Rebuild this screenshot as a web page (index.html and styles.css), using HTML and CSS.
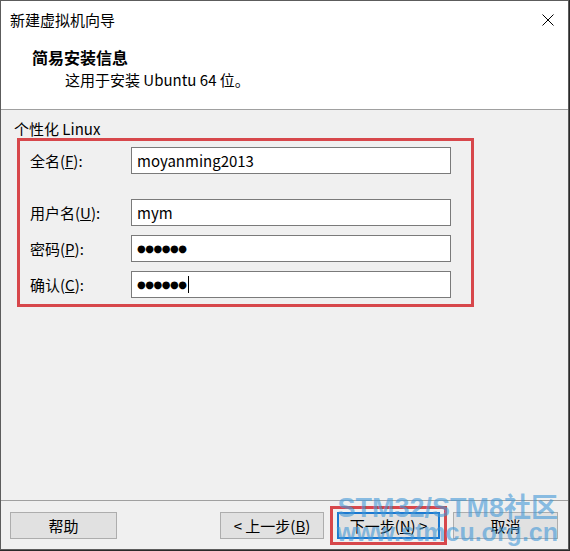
FILE: index.html
```html
<!DOCTYPE html>
<html lang="zh-CN">
<head>
    <meta charset="UTF-8">
    <title>新建虚拟机向导</title>
    <link rel="stylesheet" href="styles.css">
</head>
<body>
    <div class="window">
        <div class="titlebar">
            <span class="title">新建虚拟机向导</span>
            <svg class="close" width="12" height="12" viewBox="0 0 12 12">
                <path d="M0.5 0.5 L11.5 11.5 M11.5 0.5 L0.5 11.5" stroke="#000" stroke-width="1" fill="none"/>
            </svg>
        </div>

        <div class="header">
            <h1>简易安装信息</h1>
            <p>这用于安装 Ubuntu 64 位。</p>
        </div>

        <div class="content">
            <div class="group-title">个性化 Linux</div>
            <div class="form mark">
                <div class="row first">
                    <label>全名(<u>F</u>):</label>
                    <div class="field">moyanming2013</div>
                </div>
                <div class="row">
                    <label>用户名(<u>U</u>):</label>
                    <div class="field">mym</div>
                </div>
                <div class="row">
                    <label>密码(<u>P</u>):</label>
                    <div class="field dots">●●●●●●</div>
                </div>
                <div class="row">
                    <label>确认(<u>C</u>):</label>
                    <div class="field dots">●●●●●●<span class="caret"></span></div>
                </div>
            </div>
        </div>

        <div class="footer">
            <button class="btn btn-help">帮助</button>
            <span class="spacer"></span>
            <button class="btn btn-back">&lt; 上一步(<u>B</u>)</button>
            <span class="mark next-wrap">
                <button class="btn btn-next">下一步(<u>N</u>) &gt;</button>
            </span>
            <button class="btn btn-cancel">取消</button>
        </div>

        <div class="watermark">
            <div class="wm-top">STM32/STM8社区</div>
            <div class="wm-bottom">www.stmcu.org.cn</div>
        </div>
    </div>
</body>
</html>
```

FILE: styles.css
```css
body {
    margin: 0;
    background: #2a2a2a;
    font-family: 'Noto Sans CJK SC', sans-serif;
    font-size: 15px;
    color: #000000;
}
.window {
    position: relative;
    width: 569px;
    height: 550px;
    box-sizing: border-box;
    border: 1px solid #5c5c5c;
    background: #f0f0f0;
    display: flex;
    flex-direction: column;
    overflow: hidden;
}
.titlebar {
    height: 37px;
    background: #ffffff;
    display: flex;
    align-items: center;
    justify-content: space-between;
    padding: 0 14px 0 9px;
}
.title {
    line-height: 37px;
}
.header {
    height: 72px;
    background: #ffffff;
    border-bottom: 1px solid #a0a0a0;
    padding: 9px 0 0 31px;
    box-sizing: border-box;
}
.header h1 {
    margin: 0;
    font-size: 16px;
    line-height: 20px;
    font-weight: bold;
}
.header p {
    margin: 3px 0 0 33px;
    line-height: 20px;
}
.content {
    height: 391px;
    box-sizing: border-box;
    border-bottom: 1px solid #a0a0a0;
    padding: 10px 0 0 13px;
}
.group-title {
    line-height: 18px;
}
.mark {
    border: 3px solid #d7474b;
}
.form {
    width: 457px;
    box-sizing: border-box;
    margin: 0 0 0 3px;
    padding: 6px 20px 6px 10px;
    display: flex;
    flex-direction: column;
    gap: 9px;
}
.row {
    display: flex;
    align-items: center;
}
.row.first {
    margin-bottom: 16px;
}
.row label {
    width: 101px;
}
.field {
    width: 320px;
    height: 27px;
    box-sizing: border-box;
    border: 1px solid #7a7a7a;
    background: #ffffff;
    padding-left: 5px;
    line-height: 25px;
    font-size: 15px;
    display: flex;
    align-items: center;
}
.dots {
    font-family: 'DejaVu Sans', sans-serif;
    font-size: 10px;
    letter-spacing: -0.5px;
}
.caret {
    display: inline-block;
    width: 1px;
    height: 17px;
    margin-left: 2px;
    background: #000000;
}
.footer {
    flex: 1;
    display: flex;
    align-items: center;
    padding: 0 10px 0 9px;
}
.spacer {
    flex: 1;
}
.btn {
    height: 27px;
    box-sizing: border-box;
    border: 1px solid #adadad;
    background: #e1e1e1;
    font-family: 'Noto Sans CJK SC', sans-serif;
    font-size: 15px;
    color: #000000;
    padding: 0;
    margin: 0;
}
.btn-help {
    width: 107px;
}
.btn-back {
    width: 104px;
}
.next-wrap {
    display: flex;
    padding: 3px 4px;
    margin: 0 6px;
}
.btn-next {
    width: 103px;
    border: 2px solid #1b78d0;
}
.btn-cancel {
    width: 105px;
}
/* site watermark stamped over the bottom-right corner */
.watermark {
    position: absolute;
    right: 10px;
    top: 495px;
    text-align: right;
    font-family: 'Liberation Sans', 'Noto Sans CJK SC', sans-serif;
    font-weight: bold;
    color: rgba(66, 152, 215, 0.6);
    pointer-events: none;
}
.wm-top {
    font-size: 27px;
    line-height: 24px;
}
.wm-bottom {
    font-size: 25px;
    line-height: 24px;
}
```
